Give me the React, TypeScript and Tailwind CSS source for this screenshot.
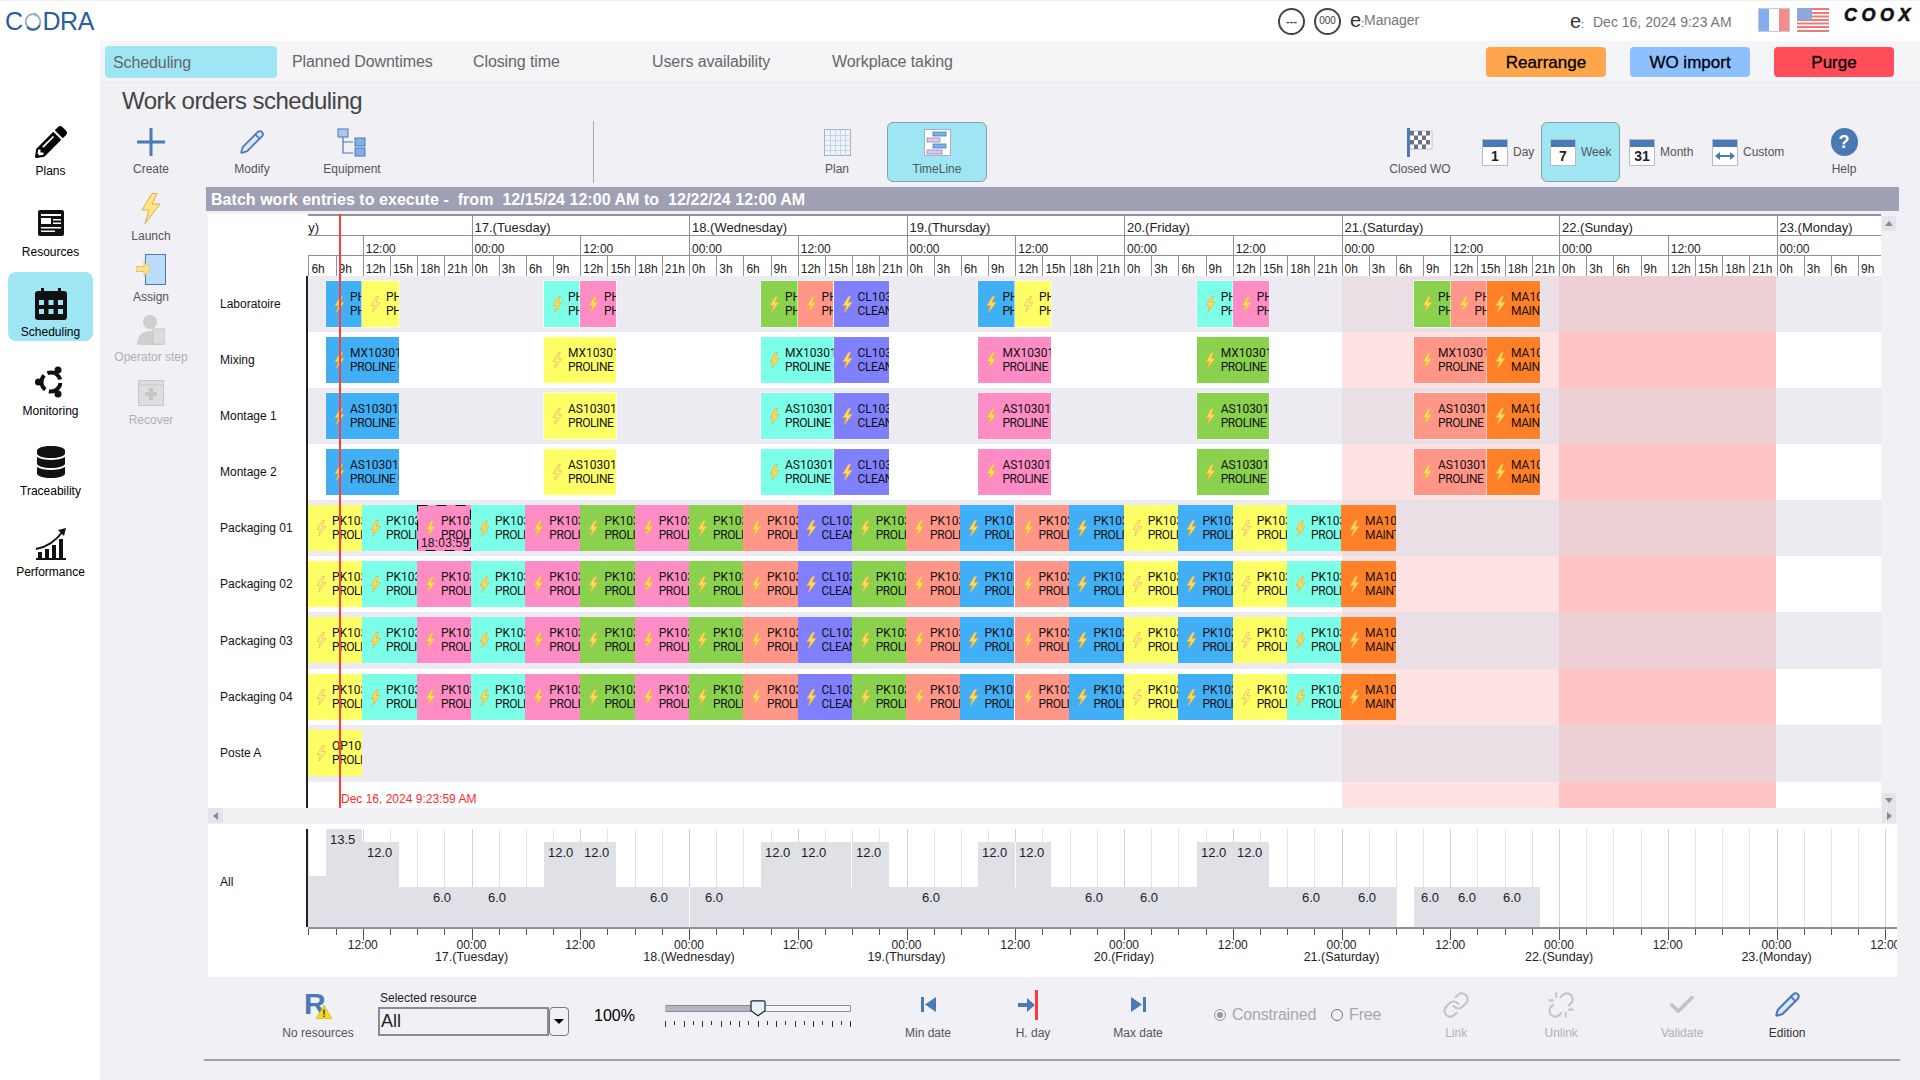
import type { ReactNode } from "react";
import { FaDatabase, FaPencilAlt } from "react-icons/fa";
import { Check, Link, Pencil, Unlink } from "lucide-react";

const bg: Record<string, string> = {
  b: "bg-[#40aff5]",
  y: "bg-[#ffff66]",
  c: "bg-[#7bffe9]",
  p: "bg-[#ff8cc4]",
  g: "bg-[#8ad24e]",
  s: "bg-[#ff9688]",
  u: "bg-[#8080ff]",
  o: "bg-[#ff8026]",
};

type Bar = { from: number; to: number; color: string; top: string; bottom: string };

const bar = (from: number, to: number, color: string, top: string, bottom: string): Bar => ({ from, to, color, top, bottom });

const clean = (a: number, b: number) => bar(a, b, "u", "CL10301", "CLEANING");
const maint = (a: number, b: number) => bar(a, b, "o", "MA10301", "MAINTENANCE");

const labBars: Bar[] = [
  bar(326, 362, "b", "PH10301", "PHARMA"),
  bar(362, 399, "y", "PH10301", "PHARMA"),
  bar(544, 580, "c", "PH10301", "PHARMA"),
  bar(580, 616, "p", "PH10301", "PHARMA"),
  bar(761, 797.6, "g", "PH10301", "PHARMA"),
  bar(797.6, 833.5, "s", "PH10301", "PHARMA"),
  clean(833.5, 888.6),
  bar(978.4, 1015, "b", "PH10301", "PHARMA"),
  bar(1015, 1051.4, "y", "PH10301", "PHARMA"),
  bar(1196.7, 1232.7, "c", "PH10301", "PHARMA"),
  bar(1232.7, 1268.6, "p", "PH10301", "PHARMA"),
  bar(1414, 1450.6, "g", "PH10301", "PHARMA"),
  bar(1450.6, 1487, "s", "PH10301", "PHARMA"),
  maint(1487, 1540.4),
];

const wideBars = (code: string): Bar[] => [
  bar(326, 399, "b", code, "PROLINE C"),
  bar(544, 616, "y", code, "PROLINE C"),
  bar(761, 833.5, "c", code, "PROLINE C"),
  clean(833.5, 888.6),
  bar(978.4, 1051.4, "p", code, "PROLINE F"),
  bar(1196.7, 1268.6, "g", code, "PROLINE I"),
  bar(1414, 1487, "s", code, "PROLINE F"),
  maint(1487, 1540.4),
];

const packEdges = [308, 362, 417, 471, 525.3, 580.4, 634.7, 689, 743, 797.5, 851.7, 906, 960.4, 1014.5, 1069.4, 1123.7, 1178.4, 1232.7, 1287, 1341, 1396];
const packColors = "y c p c p g p g s u g s b s b y b y c o".split(" ");

const packBars: Bar[] = packColors.map((c, i) => {
  if (c === "u") return clean(packEdges[i], packEdges[i + 1]);
  if (c === "o") return maint(packEdges[i], packEdges[i + 1]);
  return bar(packEdges[i], packEdges[i + 1], c, "PK10301", "PROLINE");
});

const rows: { name: string; bars: Bar[]; selected?: boolean; sparse?: boolean }[] = [
  { name: "Laboratoire", bars: labBars, sparse: true },
  { name: "Mixing", bars: wideBars("MX10301"), sparse: true },
  { name: "Montage 1", bars: wideBars("AS10301"), sparse: true },
  { name: "Montage 2", bars: wideBars("AS10301"), sparse: true },
  { name: "Packaging 01", bars: packBars, selected: true },
  { name: "Packaging 02", bars: packBars },
  { name: "Packaging 03", bars: packBars },
  { name: "Packaging 04", bars: packBars },
  { name: "Poste A", bars: [bar(308, 362, "y", "OP10301", "PROLINE")] },
];

const ORIGIN = 308;
const hx = (h: number) => 471.5 + h * 9.0625;
const hours: number[] = [];
for (let h = -18; hx(h) < 1900; h += 3) hours.push(h);

const days = [
  [-24, "16.(Monday)"],
  [0, "17.(Tuesday)"],
  [24, "18.(Wednesday)"],
  [48, "19.(Thursday)"],
  [72, "20.(Friday)"],
  [96, "21.(Saturday)"],
  [120, "22.(Sunday)"],
  [144, "23.(Monday)"],
] as const;

const loadShape: [number, number, number][] = [
  [308, 326, 876],
  [326, 362, 829],
  [362, 399, 842],
  [399, 544, 887],
  [544, 616, 842],
  [616, 761, 887],
  [761, 889, 842],
  [889, 978, 887],
  [978, 1051, 842],
  [1051, 1197, 887],
  [1197, 1269, 842],
  [1269, 1396, 887],
  [1414, 1540, 887],
];

const loadValues: [number, number, string][] = [
  [330, 840, "13.5"], [367, 853, "12.0"], [433, 898, "6.0"], [488, 898, "6.0"], [548, 853, "12.0"], [584, 853, "12.0"],
  [650, 898, "6.0"], [705, 898, "6.0"], [765, 853, "12.0"], [801, 853, "12.0"], [856, 853, "12.0"], [922, 898, "6.0"],
  [982, 853, "12.0"], [1019, 853, "12.0"], [1085, 898, "6.0"], [1140, 898, "6.0"], [1201, 853, "12.0"], [1237, 853, "12.0"],
  [1302, 898, "6.0"], [1358, 898, "6.0"], [1421, 898, "6.0"], [1458, 898, "6.0"], [1503, 898, "6.0"],
];

const Bolt = ({ faded }: { faded?: boolean }) => (
  <svg viewBox="0 0 11 17" className="w-[11px] h-[17px]">
    <path
      d="M6.5.5 1 9.5h3.5L2.5 16.5 10 6.5H6L8.5.5Z"
      fill={faded ? "#fff27a" : "#ffdc55"}
      stroke={faded ? "#ecbc60" : "#e8b04a"}
      strokeWidth="0.8"
    />
  </svg>
);

const GanttBar = ({ b, sparse }: { b: Bar; sparse?: boolean }) => (
  <div
    className={`absolute top-[5px] h-[46px] overflow-hidden ${bg[b.color]} ${sparse ? "shadow-[0_0_0_1px_rgba(255,255,255,0.55)]" : ""}`}
    style={{ left: b.from - ORIGIN, width: b.to - b.from }}
  >
    <div className="absolute left-[8px] top-[15px]">
      <Bolt faded={b.color === "y"} />
    </div>
    <div className="pl-[24px] pt-[9px] font-['Roboto',sans-serif] text-[12px] leading-[14px] text-[#111] whitespace-nowrap">
      <div>{b.top}</div>
      <div className="tracking-[-0.4px]">{b.bottom}</div>
    </div>
  </div>
);

const Tool = ({
  label,
  icon,
  width = "w-[100px]",
  text = "text-[#555]",
  top = "mt-[7px]",
  box = "h-[28px]",
  gap = "mt-[6px]",
}: {
  label: string;
  icon: ReactNode;
  width?: string;
  text?: string;
  top?: string;
  box?: string;
  gap?: string;
}) => (
  <div className={`flex flex-col items-center shrink-0 ${width}`}>
    <div className={`flex items-center justify-center ${top} ${box}`}>{icon}</div>
    <div className={`text-[12px] leading-[14px] whitespace-nowrap ${gap} ${text}`}>{label}</div>
  </div>
);

const CalIcon = ({ children }: { children: ReactNode }) => (
  <div className="w-[26px] h-[27px] bg-white border border-[#b8bcc8] flex flex-col shrink-0">
    <div className="h-[7px] bg-[#4a7ab5]" />
    <div className="flex-1 flex items-center justify-center text-[14px] leading-none font-bold text-[#222]">{children}</div>
  </div>
);

const BlueFill = "#a9c8f0";
const Blue = "#4a7ab5";

const PerfIcon = () => (
  <svg viewBox="0 0 32 33" className="w-[32px] h-[33px]">
    <path d="M1 22C12 20 21 14 28 4" fill="none" stroke="#111" strokeWidth="2" />
    <path d="M23 3l8-2-2 8Z" fill="#111" />
    <path d="M3 25h4v6H3ZM10 22h4v9h-4ZM17 18h4v13h-4ZM24 12h4v19h-4ZM1 31h30v2H1Z" fill="#111" />
  </svg>
);

const nav = [
  {
    label: "Plans",
    box: "mt-0",
    icon: <FaPencilAlt className="w-[32px] h-[32px] text-black" />,
  },
  {
    label: "Resources",
    box: "mt-[12px]",
    icon: (
      <svg viewBox="0 0 26 26" className="w-[26px] h-[26px]">
        <rect width="26" height="26" rx="2" fill="#111" />
        <path d="M3 4h20v2H3ZM3 8h10v6H3Z" fill="#fff" />
        <path d="M15 9h8v1.600h-8ZM15 12.500h8v1.600h-8ZM3 17h20v1.600H3ZM3 20.500h14v1.600H3Z" fill="#fff" />
      </svg>
    ),
  },
  {
    label: "Scheduling",
    box: "mt-[7px]",
    active: true,
    icon: (
      <svg viewBox="0 0 32 32" className="w-[32px] h-[32px]">
        <rect y="3" width="32" height="29" rx="3" fill="#111" />
        <path d="M6 0h3v6H6ZM23 0h3v6h-3Z" fill="#111" />
        <g fill="#9fe6f5">
          <rect x="4" y="12" width="5" height="5" />
          <rect x="13.500" y="12" width="5" height="5" />
          <rect x="23" y="12" width="5" height="5" />
          <rect x="4" y="21" width="5" height="5" />
          <rect x="13.500" y="21" width="5" height="5" />
          <rect x="23" y="21" width="5" height="5" />
        </g>
      </svg>
    ),
  },
  {
    label: "Monitoring",
    box: "mt-[14px]",
    icon: (
      <svg viewBox="0 0 32 32" className="w-[32px] h-[32px]">
        <circle cx="16" cy="16" r="9.500" fill="none" stroke="#111" strokeWidth="4" strokeDasharray="16 3.900" strokeDashoffset="-1" />
        <circle cx="3.500" cy="16" r="3.500" fill="#111" />
        <circle cx="23" cy="4" r="3.500" fill="#111" />
        <circle cx="23" cy="28" r="3.500" fill="#111" />
      </svg>
    ),
  },
  {
    label: "Traceability",
    box: "mt-[11px]",
    icon: <FaDatabase className="w-[28px] h-[32px] text-[#111]" />,
  },
  {
    label: "Performance",
    box: "mt-[12px]",
    icon: <PerfIcon />,
  },
];

const App = () => {
  return (
    <div className="w-[1920px] h-[1080px] overflow-hidden bg-white flex flex-col font-['Liberation_Sans',Arial,sans-serif] text-[#222]">
      {/* top bar */}
      <div className="h-[41px] shrink-0 flex items-center border-t border-[#f0f0f0] relative">
        <div className="ml-[5px] w-[90px] flex items-center text-[25px] leading-none text-[#2a5c9e] tracking-[-0.5px]">
          <span>C</span>
          <svg viewBox="0 0 20 22" className="w-[18px] h-[19px] mx-[1px]">
            <circle cx="10" cy="11" r="8.500" fill="none" stroke="#9aa6b8" strokeWidth="2" />
            <path d="M3 17a8.500 8.500 0 0 0 15 -2" fill="none" stroke="#2a5c9e" strokeWidth="2" />
            <path d="M12 1l2 4" stroke="#9aa6b8" strokeWidth="2" />
          </svg>
          <span>DRA</span>
        </div>
        <div className="ml-[1183px] w-[27px] h-[27px] rounded-full border-2 border-[#444] flex items-center justify-center text-[11px] font-bold leading-none text-[#444]">---</div>
        <div className="ml-[9px] w-[27px] h-[27px] rounded-full border-2 border-[#444] flex items-center justify-center text-[10px] leading-none text-[#444]">000</div>
        <span className="ml-[9px] w-[14px] text-[20px] leading-none text-[#333] -mt-[3px]">
          e<span className="text-[10px]">:</span>
        </span>
        <span className="text-[14px] leading-none text-[#777] -mt-[3px] w-[206px]">Manager</span>
        <span className="w-[23px] text-[20px] leading-none text-[#333]">
          e<span className="text-[10px]">:</span>
        </span>
        <span className="text-[14px] leading-none text-[#777] w-[165px] mt-[1px]">Dec 16, 2024 9:23 AM</span>
        <div className="flex w-[32px] h-[24px] -mt-[2px] border border-[#c4c8d4]">
          <div className="flex-1 bg-[#80aef0]" />
          <div className="flex-1 bg-white" />
          <div className="flex-1 bg-[#f58b8b]" />
        </div>
        <svg viewBox="0 0 32 24" className="ml-[7px] w-[32px] h-[24px] -mt-[2px]">
          <rect width="32" height="24" fill="#fff" />
          <g fill="#f07a7a">
            <rect width="32" height="2" />
            <rect y="4" width="32" height="2" />
            <rect y="7.500" width="32" height="2" />
            <rect y="11" width="32" height="2" />
            <rect y="14.500" width="32" height="2" />
            <rect y="18" width="32" height="2" />
            <rect y="22" width="32" height="2" />
          </g>
          <rect width="15" height="12" fill="#8fa8dc" />
        </svg>
        <span className="ml-[15px] -mt-[13px] text-[18px] leading-none font-bold italic tracking-[4.5px] [-webkit-text-stroke:0.6px_#111] text-[#111]">COOX</span>
      </div>

      <div className="flex-1 flex min-h-0">
        {/* left nav */}
        <div className="w-[100px] shrink-0 pt-[74px] pl-[8px] bg-white">
          {nav.map((n) => (
            <div
              key={n.label}
              className={`w-[85px] h-[69px] rounded-lg flex flex-col items-center ${n.box} ${n.active ? "bg-[#9fe6f5]" : ""}`}
            >
              <div className={`h-[34px] flex items-center justify-center ${n.active ? "mt-[15px]" : "mt-[10px]"}`}>{n.icon}</div>
              <div className={`text-[12px] leading-[14px] text-black ${n.active ? "mt-[4px]" : "mt-[5px]"}`}>{n.label}</div>
            </div>
          ))}
        </div>

        <div className="flex-1 bg-[#f0f0f5] flex flex-col">
          {/* tabs */}
          <div className="h-[40px] shrink-0 bg-[#f5f5f7] flex items-center pt-[2px] text-[16px] tracking-[-0.1px] text-[#666]">
            <div className="ml-[5px] w-[172px] h-[32px] rounded bg-[#9fe6f5] flex items-center pl-[8px] pt-[2px]">Scheduling</div>
            <div className="ml-[15px] w-[181px]">Planned Downtimes</div>
            <div className="w-[179px]">Closing time</div>
            <div className="w-[180px]">Users availability</div>
            <div>Workplace taking</div>
            <div className="ml-auto mr-[26px] flex gap-[24px] text-[17px] tracking-normal text-black">
              <div className="w-[120px] h-[30px] pt-[2px] rounded bg-[#ffa64d] flex items-center justify-center font-medium [-webkit-text-stroke:0.3px_black]">Rearrange</div>
              <div className="w-[120px] h-[30px] pt-[2px] rounded bg-[#8cc0ff] flex items-center justify-center font-medium [-webkit-text-stroke:0.3px_black]">WO import</div>
              <div className="w-[120px] h-[30px] pt-[2px] rounded bg-[#ff4d59] flex items-center justify-center font-medium [-webkit-text-stroke:0.3px_black]">Purge</div>
            </div>
          </div>

          {/* title */}
          <div className="h-[40px] shrink-0 pl-[22px] flex items-center text-[24px] tracking-[-0.53px] text-[#444]">Work orders scheduling</div>

          {/* toolbar */}
          <div className="h-[66px] shrink-0 flex">
            <Tool
              width="w-[102px]"
              label="Create"
              icon={
                <svg viewBox="0 0 28 28" className="w-[28px] h-[28px]">
                  <path d="M12.500 0h3v12.500H28v3H15.500V28h-3V15.500H0v-3h12.500Z" fill={Blue} />
                </svg>
              }
            />
            <Tool label="Modify" icon={<Pencil className="w-[26px] h-[26px]" color={Blue} fill="#dbe7f7" strokeWidth={1.6} />} />
            <Tool
              label="Equipment"
              icon={
                <svg viewBox="0 0 30 29" className="w-[30px] h-[29px]">
                  <path d="M6 9v16h10M6 14h10" fill="none" stroke={Blue} strokeWidth="1.200" />
                  <rect x="1" y="1" width="10" height="8" fill={BlueFill} stroke={Blue} />
                  <rect x="18" y="10" width="10" height="8" fill="#7fb0ec" stroke={Blue} />
                  <rect x="18" y="20" width="10" height="8" fill="#7fb0ec" stroke={Blue} />
                </svg>
              }
            />
            <div className="ml-[191px] w-px h-[62px] bg-[#a8a8a8] shrink-0" />
            <Tool
              width="w-[100px] ml-[193px]"
              label="Plan"
              icon={
                <svg viewBox="0 0 27 27" className="w-[27px] h-[27px]">
                  <rect x=".5" y=".5" width="26" height="26" fill="#eef4fa" stroke="#a8b0c0" />
                  <path d="M.5 6.500h26M.5 11.500h26M.5 16.500h26M.5 21.500h26M6.500.5v26M11.500.5v26M16.500.5v26M21.500.5v26" stroke="#c6d4e4" />
                </svg>
              }
            />
            <div className="w-[100px] h-[60px] mt-px shrink-0 rounded-md bg-[#9fe6f5] border border-[#8aa0a8]">
              <Tool
                width="w-full"
                top="mt-[5px]"
                label="TimeLine"
                icon={
                  <svg viewBox="0 0 27 27" className="w-[27px] h-[27px]">
                    <rect x=".5" y=".5" width="26" height="26" fill="#fff" stroke="#a8b0c0" />
                    <rect x="9" y="3" width="13" height="4" fill="#7fb0ec" stroke={Blue} strokeWidth=".8" />
                    <rect x="3" y="9" width="13" height="4" fill="#dcc8ee" stroke="#9a80b8" strokeWidth=".8" />
                    <rect x="9" y="15" width="13" height="4" fill="#7fb0ec" stroke={Blue} strokeWidth=".8" />
                    <rect x="3" y="21" width="15" height="4" fill="#dcc8ee" stroke="#9a80b8" strokeWidth=".8" />
                  </svg>
                }
              />
            </div>
            <Tool
              width="w-[100px] ml-[383px]"
              label="Closed WO"
              icon={
                <svg viewBox="0 0 26 29" className="w-[26px] h-[29px]">
                  <rect x="0" y="0" width="3" height="29" fill={Blue} />
                  <rect x="3" y="3" width="22" height="18" fill="#fff" stroke="#9aa0ae" strokeWidth=".6" />
                  <g fill="#6a7284">
                    <path d="M3 3h4v4.500H3ZM11 3h4v4.500h-4ZM19 3h4v4.500h-4ZM7 7.500h4V12H7ZM15 7.500h4V12h-4ZM3 12h4v4.500H3ZM11 12h4v4.500h-4ZM19 12h4v4.500h-4ZM7 16.500h4V21H7ZM15 16.500h4V21h-4Z" />
                  </g>
                </svg>
              }
            />
            <div className="ml-[12px] w-[59px] h-[60px] mt-px flex items-center gap-[5px] text-[12px] text-[#555] shrink-0">
              <CalIcon>1</CalIcon>
              Day
            </div>
            <div className="w-[79px] h-[60px] mt-px pl-[8px] rounded-md bg-[#9fe6f5] border border-[#8aa0a8] flex items-center gap-[5px] text-[12px] text-[#555] shrink-0">
              <CalIcon>7</CalIcon>
              Week
            </div>
            <div className="ml-[9px] w-[83px] h-[60px] mt-px flex items-center gap-[5px] text-[12px] text-[#555] shrink-0">
              <CalIcon>31</CalIcon>
              Month
            </div>
            <div className="w-[82px] h-[60px] mt-px flex items-center gap-[5px] text-[12px] text-[#555] shrink-0">
              <CalIcon>
                <svg viewBox="0 0 20 10" className="w-[20px] h-[10px]">
                  <path d="M0 5l5-4v3h10V1l5 4-5 4V6H5v3Z" fill={Blue} />
                </svg>
              </CalIcon>
              Custom
            </div>
            <Tool
              label="Help"
              icon={
                <div className="w-[27px] h-[28px] rounded-full bg-[#4a7ab5] text-white font-bold text-[18px] leading-none flex items-center justify-center">?</div>
              }
            />
          </div>

          <div className="flex flex-1 min-h-0">
            {/* left tools */}
            <div className="w-[106px] shrink-0 flex flex-col items-start">
              <Tool
                width="w-[102px]"
                top="mt-[6px]"
                box="h-[30px]"
                label="Launch"
                icon={
                  <svg viewBox="0 0 20 31" className="w-[20px] h-[31px]">
                    <path d="M11 .5 1 17h7L4 30.500 19 11h-8l5-10.500Z" fill="#ffe680" stroke="#dcaa55" />
                  </svg>
                }
              />
              <Tool
                width="w-[102px]"
                top="mt-[11px]"
                box="h-[30px]"
                label="Assign"
                icon={
                  <svg viewBox="0 0 30 31" className="w-[30px] h-[31px]">
                    <rect x="9.500" y=".5" width="20" height="30" fill="#bcdcfc" stroke={Blue} />
                    <path d="M0 12.500h8V8l7 7-7 7v-4.500H0Z" fill="#ffe08a" stroke="#e0b860" strokeWidth=".8" />
                  </svg>
                }
              />
              <Tool
                width="w-[102px]"
                top="mt-[12px]"
                box="h-[28px]"
                label="Operator step"
                text="text-[#b0b0b0]"
                icon={
                  <svg viewBox="0 0 28 30" className="w-[28px] h-[30px]">
                    <circle cx="13" cy="7" r="7" fill="#cfcfcf" />
                    <path d="M0 30c0-9 5-14 13-14s13 5 13 14Z" fill="#cfcfcf" />
                    <rect x="16" y="14" width="12" height="15" fill="#dcdcdc" stroke="#c4c4c4" />
                  </svg>
                }
              />
              <Tool
                width="w-[102px]"
                top="mt-[14px]"
                box="h-[30px]"
                gap="mt-[5px]"
                label="Recover"
                text="text-[#b0b0b0]"
                icon={
                  <svg viewBox="0 0 26 26" className="w-[26px] h-[26px]">
                    <rect x=".5" y=".5" width="25" height="25" fill="#dedee0" stroke="#c8c8cc" />
                    <path d="M.5 5h25" stroke="#c8c8cc" />
                    <path d="M11 8h4v4h4v4h-4v4h-4v-4H7v-4h4Z" fill="#c4c4c8" />
                  </svg>
                }
              />
            </div>

            <div className="flex-1 flex flex-col min-w-0">
              <div className="w-[1693px] h-[24px] bg-[#a0a0b4] pl-[5px] pt-[1px] flex items-center text-[16px] font-bold tracking-[0.04px] text-white whitespace-pre">
                {"Batch work entries to execute -  from  12/15/24 12:00 AM to  12/22/24 12:00 AM"}
              </div>

              <div className="mt-[3px] ml-[2px] w-[1689px] flex flex-col">
                <div className="flex">
                  {/* gantt */}
                  <div className="w-[1673px] bg-white relative">
                    <div className="flex">
                      <div className="w-[100px] shrink-0" />
                      <div className="flex-1 h-[62px] relative overflow-hidden text-[12px] leading-[14px] text-[#222]">
                        <div className="absolute left-0 right-0 top-0 h-[2px] bg-[#909098]" />
                        <div className="absolute left-0 right-0 top-[21px] h-[1px] bg-[#909098]" />
                        <div className="absolute left-0 right-0 top-[41px] h-[1px] bg-[#909098]" />
                        {days.map(([h, label]) => (
                          <div key={label}>
                            <div className="absolute top-0 h-[21px] w-px bg-[#909098]" style={{ left: hx(h) - ORIGIN }} />
                            <div className="absolute top-[7px] text-[13px] whitespace-nowrap" style={{ left: hx(h) - ORIGIN + (h < 0 ? -8 : 3) }}>{label}</div>
                          </div>
                        ))}
                        {hours.filter((h) => h % 12 === 0).map((h) => (
                          <div key={h}>
                            <div className="absolute top-[21px] h-[20px] w-px bg-[#909098]" style={{ left: hx(h) - ORIGIN }} />
                            <div className="absolute top-[28px]" style={{ left: hx(h) - ORIGIN + 3 }}>{h % 24 === 0 ? "00:00" : "12:00"}</div>
                          </div>
                        ))}
                        {hours.map((h) => (
                          <div key={h}>
                            <div className="absolute top-[41px] h-[21px] w-px bg-[#909098]" style={{ left: hx(h) - ORIGIN }} />
                            <div className="absolute top-[48px]" style={{ left: hx(h) - ORIGIN + 3 }}>{((h % 24) + 24) % 24}h</div>
                          </div>
                        ))}
                      </div>
                    </div>

                    {rows.map((row, i) => (
                      <div key={row.name} className={`flex ${i >= 5 ? "h-[56.4px]" : "h-[56px]"}`}>
                        <div className="w-[98px] shrink-0 pl-[12px] flex items-center text-[12px] text-[#111]">{row.name}</div>
                        <div className="w-[2px] bg-[#222] shrink-0" />
                        <div className={`flex-1 relative overflow-hidden ${i % 2 === 0 ? "bg-[#ecebf1]" : "bg-white"}`}>
                          <div className={`absolute top-0 bottom-0 left-[1034px] w-[217px] ${i % 2 === 0 ? "bg-[#eadfe5]" : "bg-[#ffe3e3]"}`} />
                          <div className={`absolute top-0 bottom-0 left-[1251px] w-[217px] ${i % 2 === 0 ? "bg-[#ecd0d5]" : "bg-[#ffc5c5]"}`} />
                          {row.bars.map((b) => (
                            <GanttBar key={b.from} b={b} sparse={row.sparse} />
                          ))}
                          {row.selected && (
                            <div className="absolute top-[5px] left-[109px] w-[54px] h-[46px]">
                              <svg viewBox="0 0 54 46" className="absolute inset-0 w-[54px] h-[46px]">
                                <rect x=".5" y=".5" width="53" height="45" fill="none" stroke="#111" strokeWidth="1.200" strokeDasharray="10 9" />
                              </svg>
                              <div className="absolute left-[4px] bottom-[1px] text-[12px] leading-[14px] tracking-[0.2px] text-[#111]">18:03:59</div>
                            </div>
                          )}
                        </div>
                      </div>
                    ))}

                    <div className="flex h-[26px]">
                      <div className="w-[98px] shrink-0" />
                      <div className="w-[2px] bg-[#222] shrink-0" />
                      <div className="flex-1 relative bg-white">
                        <div className="absolute top-0 bottom-0 left-[1034px] w-[217px] bg-[#ffe3e3]" />
                        <div className="absolute top-0 bottom-0 left-[1251px] w-[217px] bg-[#ffc5c5]" />
                        <div className="absolute left-[33px] top-[10px] text-[12px] leading-[14px] text-[#ff2a2a] whitespace-nowrap">Dec 16, 2024 9:23:59 AM</div>
                      </div>
                    </div>

                    <div className="absolute top-0 bottom-0 left-[131px] w-[2px] bg-[#ff3b3b]" />
                  </div>

                  {/* vertical scrollbar */}
                  <div className="w-[16px] flex flex-col justify-between items-center bg-[#f0f0f5] pt-[2px]">
                    <div className="w-[14px] h-[15px] bg-[#e4e4ea] flex items-center justify-center">
                      <div className="w-0 h-0 border-x-[4px] border-x-transparent border-b-[5px] border-b-[#8a8a92]" />
                    </div>
                    <div className="w-[14px] h-[15px] bg-[#e4e4ea] flex items-center justify-center">
                      <div className="w-0 h-0 border-x-[4px] border-x-transparent border-t-[5px] border-t-[#8a8a92]" />
                    </div>
                  </div>
                </div>

                {/* horizontal scrollbar */}
                <div className="h-[16px] flex justify-between items-center bg-[#f0f0f5]">
                  <div className="w-[15px] h-[15px] bg-[#e4e4ea] flex items-center justify-center">
                    <div className="w-0 h-0 border-y-[4px] border-y-transparent border-r-[5px] border-r-[#8a8a92]" />
                  </div>
                  <div className="w-[14px] h-[15px] mr-px bg-[#e4e4ea] flex items-center justify-center">
                    <div className="w-0 h-0 border-y-[4px] border-y-transparent border-l-[5px] border-l-[#8a8a92]" />
                  </div>
                </div>

                {/* load chart */}
                <div className="h-[153px] bg-white flex">
                  <div className="w-[98px] shrink-0 pl-[12px] pb-[36px] flex items-center text-[12px] text-[#111]">All</div>
                  <div className="w-[2px] h-[98px] mt-[5px] bg-[#222] shrink-0" />
                  <div className="flex-1 relative overflow-hidden">
                    {hours.map((h) => (
                      <div
                        key={h}
                        className={`absolute top-[5px] h-[98px] w-px ${h % 12 === 0 ? "bg-[#d0d0d6]" : "bg-[#e4e4e8]"}`}
                        style={{ left: hx(h) - ORIGIN }}
                      />
                    ))}
                    {loadShape.map(([a, b, t]) => (
                      <div
                        key={a}
                        className="absolute bg-[#e0e1e6]"
                        style={{ left: a - ORIGIN, width: b - a, top: t - 824, height: 927 - t }}
                      />
                    ))}
                    <div className="absolute left-[381px] top-[63px] w-px h-[40px] bg-white" />
                    <div className="absolute left-[543px] top-[18px] w-px h-[45px] bg-white" />
                    <div className="absolute left-[707px] top-[18px] w-px h-[45px] bg-white" />
                    {loadValues.map(([x, y, v]) => (
                      <div key={x} className="absolute text-[13px] leading-[14px] text-[#222]" style={{ left: x - ORIGIN, top: y - 831 }}>{v}</div>
                    ))}
                    <div className="absolute left-0 right-0 top-[103px] h-[2px] bg-[#909098]" />
                    {hours.map((h) => (
                      <div
                        key={h}
                        className={`absolute top-[105px] w-px bg-[#555] ${h % 12 === 0 ? "h-[11px]" : "h-[6px]"}`}
                        style={{ left: hx(h) - ORIGIN }}
                      />
                    ))}
                    {hours.filter((h) => h % 12 === 0).map((h) => (
                      <div
                        key={h}
                        className="absolute top-[114px] -translate-x-1/2 text-[12px] leading-[14px] text-[#222]"
                        style={{ left: hx(h) - ORIGIN }}
                      >
                        {h % 24 === 0 ? "00:00" : "12:00"}
                      </div>
                    ))}
                    {days.slice(1).map(([h, label]) => (
                      <div
                        key={label}
                        className="absolute top-[126px] -translate-x-1/2 text-[12.500px] leading-[14px] whitespace-nowrap text-[#222]"
                        style={{ left: hx(h) - ORIGIN }}
                      >
                        {label}
                      </div>
                    ))}
                  </div>
                </div>
              </div>

              {/* bottom controls */}
              <div className="h-[82px] shrink-0 flex">
                <Tool
                  width="w-[100px] ml-[62px]"
                  top="mt-[14px]"
                  gap="mt-[7px]"
                  label="No resources"
                  icon={
                    <div className="relative w-[28px] h-[28px]">
                      <span className="absolute left-0 -top-[2px] text-[30px] leading-[30px] font-bold text-[#4a7ab5]">R</span>
                      <svg viewBox="0 0 16 14" className="absolute right-0 bottom-0 w-[16px] h-[14px]">
                        <path d="M8 0l8 14H0Z" fill="#f2d722" stroke="#c4a818" strokeWidth=".6" />
                        <path d="M7.300 4.500h1.400v5H7.300ZM7.300 10.500h1.400v1.600H7.300Z" fill="#333" />
                      </svg>
                    </div>
                  }
                />
                <div className="ml-[10px] w-[191px] shrink-0">
                  <div className="mt-[14px] ml-[2px] text-[12px] leading-[14px] text-[#222]">Selected resource</div>
                  <div className="mt-[2px] flex h-[29px]">
                    <div className="w-[171px] border-2 border-[#8a8a98] pl-[1px] flex items-center text-[18px] leading-none text-[#222]">All</div>
                    <div className="w-[20px] rounded-[4px] border border-[#777] flex items-center justify-center">
                      <div className="w-0 h-0 border-x-[5px] border-x-transparent border-t-[5px] border-t-black" />
                    </div>
                  </div>
                </div>
                <div className="ml-[25px] w-[42px] shrink-0 mt-[30px] text-[16px] leading-[18px] text-black">100%</div>
                <div className="ml-[29px] w-[186px] shrink-0 relative">
                  <div className="absolute left-0 right-0 top-[28px] h-[7px] rounded-[1px] border border-[#8a8a98] bg-[#f5f5f8]" />
                  <div className="absolute left-0 w-[93px] top-[29px] h-[5px] bg-[#b4b4c2]" />
                  <div className="absolute left-[85px] top-[23px]">
                    <svg viewBox="0 0 16 17" className="w-[16px] h-[17px]">
                      <path d="M2 .8h12l1 1v9l-7 5-7-5v-9Z" fill="#e4f2fb" stroke="#222" strokeWidth="1.200" />
                    </svg>
                  </div>
                  <div className="absolute left-0 right-0 top-[44px] flex justify-between items-start">
                    {Array.from({ length: 21 }, (_, i) => (
                      <div key={i} className={`w-px bg-[#333] ${i % 2 === 0 ? "h-[6px]" : "h-[4px]"}`} />
                    ))}
                  </div>
                </div>
                <Tool
                  width="w-[100px] ml-[27px]"
                  top="mt-[14px]"
                  gap="mt-[7px]"
                  label="Min date"
                  icon={
                    <svg viewBox="0 0 15 15" className="w-[15px] h-[15px]">
                      <path d="M0 0h3v15H0ZM15 0v15L4 7.500Z" fill={Blue} />
                    </svg>
                  }
                />
                <Tool
                  width="w-[100px] ml-[5px]"
                  top="mt-[14px]"
                  gap="mt-[7px]"
                  label="H. day"
                  icon={
                    <svg viewBox="0 0 20 30" className="w-[20px] h-[30px] -ml-[10px]">
                      <path d="M0 13h9V8l8 7-8 7v-5H0Z" fill={Blue} />
                      <rect x="17" y="0" width="3" height="30" fill="#ff3b3b" />
                    </svg>
                  }
                />
                <Tool
                  width="w-[100px] ml-[5px]"
                  top="mt-[14px]"
                  gap="mt-[7px]"
                  label="Max date"
                  icon={
                    <svg viewBox="0 0 15 15" className="w-[15px] h-[15px]">
                      <path d="M12 0h3v15h-3ZM0 0v15l11-7.500Z" fill={Blue} />
                    </svg>
                  }
                />
                <div className="ml-[26px] flex items-start pt-[29px] text-[16px] leading-[18px] tracking-[-0.2px] text-[#a8a8a8] shrink-0">
                  <div className="mt-[3px] w-[12px] h-[12px] rounded-full border border-[#999] flex items-center justify-center">
                    <div className="w-[6px] h-[6px] rounded-full bg-[#999]" />
                  </div>
                  <span className="ml-[6px]">Constrained</span>
                  <div className="ml-[15px] mt-[3px] w-[12px] h-[12px] rounded-full border border-[#777]" />
                  <span className="ml-[6px]">Free</span>
                </div>
                <Tool
                  width="w-[100px] ml-[25px]"
                  top="mt-[14px]"
                  gap="mt-[7px]"
                  text="text-[#b0b0b0]"
                  label="Link"
                  icon={<Link className="w-[28px] h-[28px]" color="#c4c4c4" strokeWidth={1.8} />}
                />
                <Tool
                  width="w-[100px] ml-[5px]"
                  top="mt-[14px]"
                  gap="mt-[7px]"
                  text="text-[#b0b0b0]"
                  label="Unlink"
                  icon={<Unlink className="w-[28px] h-[28px]" color="#c4c4c4" strokeWidth={1.8} />}
                />
                <Tool
                  width="w-[100px] ml-[21px]"
                  top="mt-[14px]"
                  gap="mt-[7px]"
                  text="text-[#b0b0b0]"
                  label="Validate"
                  icon={<Check className="w-[30px] h-[30px]" color="#c4c4c4" strokeWidth={3} />}
                />
                <Tool
                  width="w-[100px] ml-[5px]"
                  top="mt-[14px]"
                  gap="mt-[7px]"
                  text="text-[#333]"
                  label="Edition"
                  icon={<Pencil className="w-[27px] h-[27px]" color={Blue} fill="#dbe7f7" strokeWidth={1.8} />}
                />
              </div>
              <div className="-ml-[2px] w-[1696px] h-[2px] bg-[#a0a0a8]" />
            </div>
          </div>
        </div>
      </div>
    </div>
  );
};

export default App;
